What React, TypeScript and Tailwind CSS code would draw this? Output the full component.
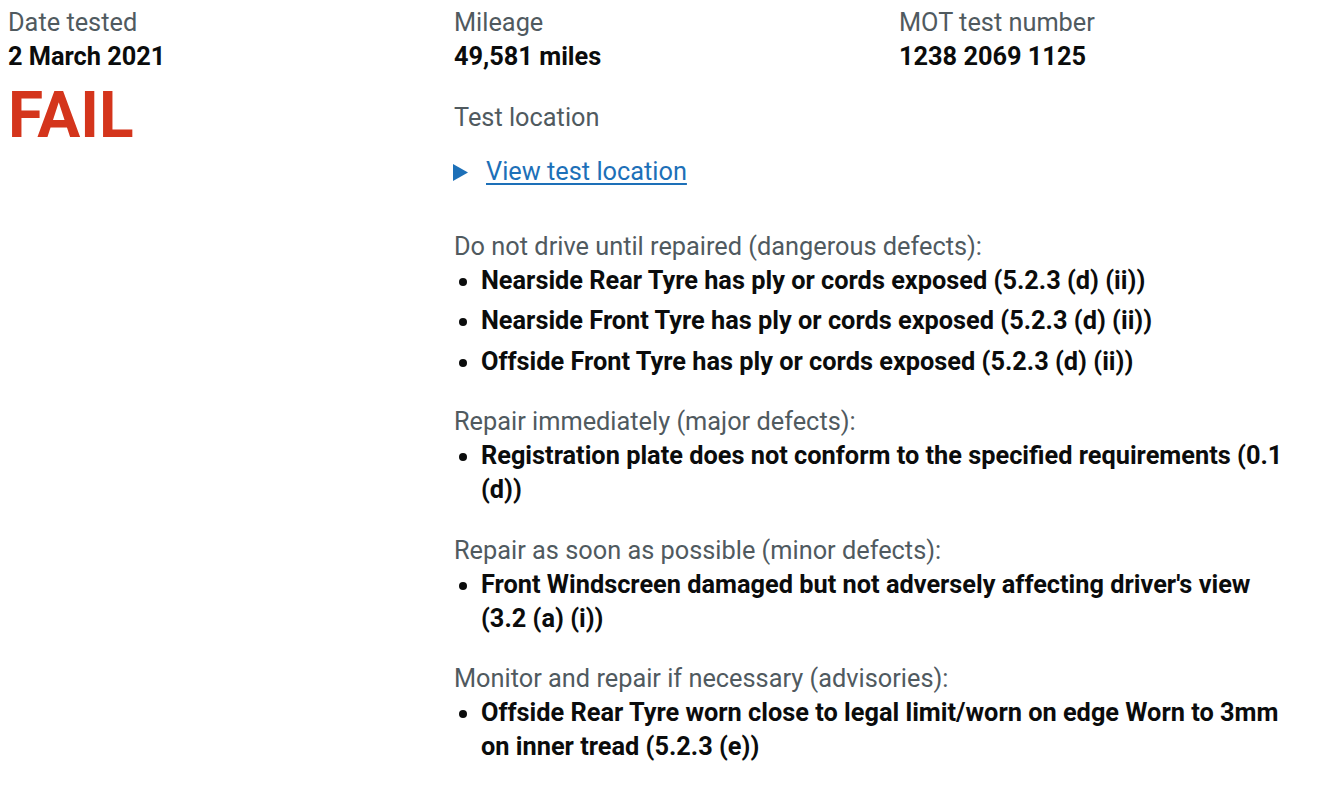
type DefectGroup = {
  heading: string;
  items: string[];
};

const defects: DefectGroup[] = [
  {
    heading: "Do not drive until repaired (dangerous defects):",
    items: [
      "Nearside Rear Tyre has ply or cords exposed (5.2.3 (d) (ii))",
      "Nearside Front Tyre has ply or cords exposed (5.2.3 (d) (ii))",
      "Offside Front Tyre has ply or cords exposed (5.2.3 (d) (ii))",
    ],
  },
  {
    heading: "Repair immediately (major defects):",
    items: ["Registration plate does not conform to the specified requirements (0.1 (d))"],
  },
  {
    heading: "Repair as soon as possible (minor defects):",
    items: ["Front Windscreen damaged but not adversely affecting driver's view (3.2 (a) (i))"],
  },
  {
    heading: "Monitor and repair if necessary (advisories):",
    items: ["Offside Rear Tyre worn close to legal limit/worn on edge Worn to 3mm on inner tread (5.2.3 (e))"],
  },
];

function Field({ label, value }: { label: string; value: string }) {
  return (
    <div>
      <div className="text-[#505a5f]">{label}</div>
      <div className="font-bold text-[#0b0c0c]">{value}</div>
    </div>
  );
}

export default function App() {
  return (
    <div
      className="flex bg-white pl-2 pr-[32px] pt-[6px] text-[25.33px] leading-[34px] text-[#0b0c0c] min-h-[786px]"
      style={{ fontFamily: "Roboto, 'Liberation Sans', sans-serif" }}
    >
      {/* left column */}
      <div className="w-[446px] shrink-0">
        <Field label="Date tested" value="2 March 2021" />
        <div className="mt-[8px] text-[64px] leading-[67px] font-bold text-[#d4351c]">FAIL</div>
      </div>

      {/* right column */}
      <div className="flex-1">
        <div className="flex">
          <div className="w-[445px] shrink-0">
            <Field label="Mileage" value="49,581 miles" />
          </div>
          <Field label="MOT test number" value="1238 2069 1125" />
        </div>

        <div className="mt-[27px] text-[#505a5f]">Test location</div>

        <div className="mt-[20px]">
          <a href="#" className="inline-flex items-center gap-[18px] -ml-px text-[#1d70b8]">
            <svg width="15" height="17" viewBox="0 0 15 17" className="shrink-0">
              <polygon points="0,0 15,8.5 0,17" fill="#1d70b8" />
            </svg>
            <span className="underline decoration-[1.5px] underline-offset-[3px]">View test location</span>
          </a>
        </div>

        <div className="mt-[40px]">
          {defects.map((group) => (
            <div key={group.heading}>
              <div className="text-[#505a5f]">{group.heading}</div>
              <ul className="list-disc pl-[27px] mb-[26.5px]">
                {group.items.map((item) => (
                  <li key={item} className="font-bold mb-[6.5px]">
                    {item}
                  </li>
                ))}
              </ul>
            </div>
          ))}
        </div>
      </div>
    </div>
  );
}
